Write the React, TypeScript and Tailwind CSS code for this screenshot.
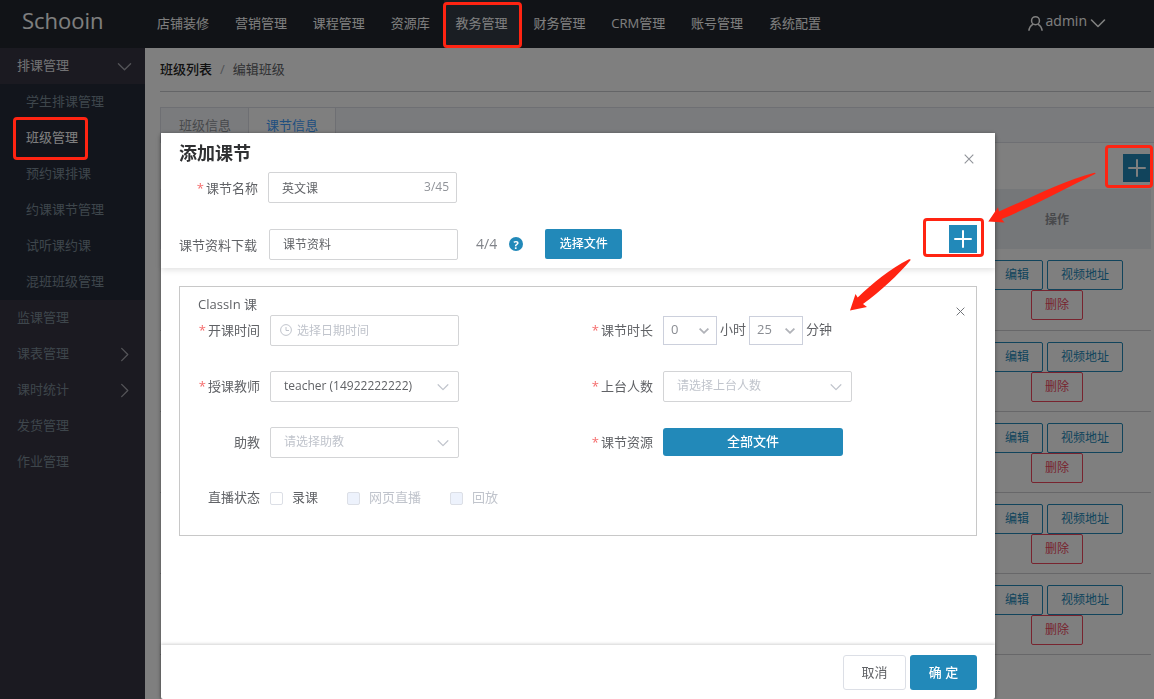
import type { ReactNode } from 'react';

const FONT = "font-['Open_Sans','Noto_Sans_CJK_SC',sans-serif]";
const FIELD =
  'h-[31px] w-full rounded-xs border border-[#d3d4d6] bg-white px-[13px] text-xs text-[#606266] outline-none placeholder:text-[#c0c4cc]';

const NAV = ['店铺装修', '营销管理', '课程管理', '资源库', '教务管理', '财务管理', 'CRM管理', '账号管理', '系统配置'];
const SUB_MENU = ['学生排课管理', '班级管理', '预约课排课', '约课课节管理', '试听课约课', '混班班级管理'];
const MENU = [
  { label: '监课管理', children: false },
  { label: '课表管理', children: true },
  { label: '课时统计', children: true },
  { label: '发货管理', children: false },
  { label: '作业管理', children: false },
];
const LESSONS = [1, 2, 3, 4, 5];

function Chevron({ className, width = 1 }: { className: string; width?: number }) {
  return (
    <svg viewBox="0 0 16 16" className={className} fill="none" stroke="currentColor" strokeWidth={width} strokeLinecap="round" strokeLinejoin="round" aria-hidden="true">
      <path d="M1.5 5 8 11.5 14.5 5" />
    </svg>
  );
}

function Cross({ className }: { className: string }) {
  return (
    <svg viewBox="0 0 10 10" className={className} fill="none" stroke="currentColor" strokeWidth="1.1" aria-hidden="true">
      <path d="M.7.7l8.6 8.6M9.3.7.7 9.3" />
    </svg>
  );
}

function Plus() {
  return (
    <svg viewBox="0 0 18 18" className="size-[18px]" fill="none" stroke="currentColor" strokeWidth="2" strokeLinecap="round" aria-hidden="true">
      <path d="M9 1v16M1 9h16" />
    </svg>
  );
}

function Highlight({ className }: { className: string }) {
  return <span className={`pointer-events-none absolute z-30 rounded-[4px] border-3 border-[#ff2412] ${className}`} />;
}

function Label({ htmlFor, required, children }: { htmlFor: string; required?: boolean; children: ReactNode }) {
  return (
    <label htmlFor={htmlFor} className="shrink-0 whitespace-nowrap text-right text-[13px] leading-5 text-[#606266]">
      {required && <span className="mr-0.5 text-[#f56c6c]">*</span>}
      {children}
    </label>
  );
}

function FormItem({ id, label, required, children }: { id: string; label: string; required?: boolean; children: ReactNode }) {
  return (
    <div className="flex h-[30px] items-center gap-[10px]">
      <div className="flex w-[75px] shrink-0 justify-end">
        <Label htmlFor={id} required={required}>{label}</Label>
      </div>
      {children}
    </div>
  );
}

function Dropdown({ id, text, placeholder }: { id: string; text: string; placeholder?: boolean }) {
  return (
    <div className="relative w-[189px]">
      <select id={id} className={`appearance-none ${FIELD} ${placeholder ? 'text-[#c0c4cc]!' : ''}`}>
        <option>{text}</option>
      </select>
      <Chevron className="pointer-events-none absolute top-[10px] right-[10px] size-3 text-[#c0c4cc]" width={1.6} />
    </div>
  );
}

function SmallSelect({ id, text, label }: { id: string; text: string; label: string }) {
  return (
    <div className="relative w-[54px]">
      <select id={id} aria-label={label} className="h-[29px] w-full appearance-none border border-[#ccd0dc] bg-white px-[7px] text-[13px] text-[#8a8d93] outline-none">
        <option>{text}</option>
      </select>
      <svg viewBox="0 0 10 6" className="pointer-events-none absolute top-3 right-2 h-[6px] w-[10px] text-[#b0b2b8]" fill="none" stroke="currentColor" strokeWidth="1.8" aria-hidden="true">
        <path d="M.6.6 5 4.800 9.400.6" />
      </svg>
    </div>
  );
}

function Check({ label, disabled }: { label: string; disabled?: boolean }) {
  return (
    <label className={`flex items-center gap-[9px] text-[13px] ${disabled ? 'text-[#c0c4cc]' : 'text-[#606266]'}`}>
      <input
        type="checkbox"
        disabled={disabled}
        className="size-[13px] appearance-none rounded-xs border border-[#dcdfe6] bg-white disabled:bg-[#edf2fc]"
      />
      {label}
    </label>
  );
}

function Header() {
  return (
    <header className="flex h-12 items-center bg-[#23272e] text-white">
      <div className="w-[145px] shrink-0 pb-2 pl-[22px] text-[22px] leading-8">Schooin</div>
      <nav className="flex h-full w-[688px] justify-between">
        {NAV.map((item) => {
          const active = item === '教务管理';
          return (
            <a key={item} href="#" className={`relative flex items-center px-3 text-[13px] whitespace-nowrap ${active ? 'bg-[#343c46]' : ''}`}>
              {item}
              {active && <Highlight className="-right-0.5 -left-px top-[2px] bottom-0" />}
            </a>
          );
        })}
      </nav>
      <button type="button" className="mr-12 mb-[6px] ml-auto flex items-center gap-[3px] text-sm">
        <svg viewBox="0 0 16 16" className="mt-1 size-[15px]" fill="none" stroke="currentColor" strokeWidth="1.6" aria-hidden="true">
          <circle cx="8" cy="5" r="4.200" />
          <path d="M1 15.800c.2-3.600 2-5.800 4.600-7.200M15 15.800c-.2-3.600-2-5.800-4.600-7.200" />
        </svg>
        admin
        <Chevron className="mt-1 size-4" width={1.6} />
      </button>
    </header>
  );
}

function Sidebar() {
  return (
    <aside className="w-[145px] shrink-0 bg-[#363442] text-[13px] text-[#7d8c98]">
      <a href="#" className="flex h-9 items-center justify-between pr-[13px] pl-[17px] text-[#e4e4e8]">
        排课管理
        <Chevron className="size-[15px] text-[#a8a8b0]" width={1.4} />
      </a>
      <div className="bg-[#242b39]">
        {SUB_MENU.map((item) => {
          const active = item === '班级管理';
          return (
            <a key={item} href="#" className={`relative flex h-9 items-center pl-[26px] ${active ? 'text-white' : ''}`}>
              {item}
              {active && <Highlight className="-top-[3px] -bottom-1 left-[13px] w-[75px]" />}
            </a>
          );
        })}
      </div>
      {MENU.map((item) => (
        <a key={item.label} href="#" className="flex h-9 items-center justify-between pr-[13px] pl-[17px]">
          {item.label}
          {item.children && <Chevron className="size-[15px] -rotate-90 text-[#a8a8b0]" width={1.4} />}
        </a>
      ))}
    </aside>
  );
}

function Page() {
  const button = 'h-[30px] rounded-xs border px-[13px] text-xs';
  return (
    <main className="min-w-0 flex-1 bg-white pl-[15px]">
      <div className="mr-[3px] flex h-11 items-center gap-2 border-b border-[#c9cbcf] text-[13px]">
        <a href="#" className="font-medium text-[#222]">班级列表</a>
        <span className="text-[#a0a4ac]">/</span>
        <span className="text-[#606266]">编辑班级</span>
      </div>
      <div className="mt-[15px] flex h-9 border border-r-0 border-[#dcdfe6] bg-[#f5f7fa] text-[13px]">
        <button type="button" className="pt-0.5 pr-[17px] pl-[18px] text-[#909399]">班级信息</button>
        <button type="button" className="border-x border-[#dcdfe6] bg-white px-[17px] pt-0.5 text-[#409eff]">课节信息</button>
      </div>
      <div className="mr-[3px] flex h-[46px] items-center justify-end pt-1">
        <div className="relative">
          <button type="button" aria-label="+" className="flex size-7 items-center justify-center bg-[#2289b9] text-white">
            <Plus />
          </button>
          <Highlight className="-top-[9px] -right-0.5 h-[43px] w-12" />
        </div>
      </div>
      <div className="mr-[3px]">
        <table className="w-full table-fixed border-collapse">
          <thead>
            <tr className="h-[60px] bg-[#ebeef2]">
              <th />
              <th className="w-[188px] pt-0.5 text-xs font-bold text-[#909399]">操作</th>
            </tr>
          </thead>
          <tbody>
            {LESSONS.map((lesson) => (
              <tr key={lesson} className="h-[81px] border-b border-[#cfcfd2]">
                <td />
                <td className="p-0 pt-0.5">
                  <div className="flex flex-wrap justify-center gap-x-1">
                    <button type="button" className={`${button} border-[#2289b9] text-[#2289b9]`}>编辑</button>
                    <button type="button" className={`${button} border-[#2289b9] text-[#2289b9]`}>视频地址</button>
                    <button type="button" className={`${button} border-[#f0485e] text-[#f0485e]`}>删除</button>
                  </div>
                </td>
              </tr>
            ))}
          </tbody>
        </table>
      </div>
    </main>
  );
}

function DialogHeader() {
  return (
    <div className="relative z-10 bg-white px-[18px] pt-[6px] pb-[9px] shadow-[0_2px_6px_rgba(0,0,0,0.12)]">
      <div className="flex h-[33px] items-start justify-between">
        <h2 className="text-lg leading-7 font-bold text-[#303133]">添加课节</h2>
        <button type="button" aria-label="×" className="p-[3px] text-[#909399]">
          <Cross className="mt-3 size-[10px]" />
        </button>
      </div>
      <div className="flex items-center gap-[10px]">
        <div className="flex w-[79px] justify-end"><Label htmlFor="name" required>课节名称</Label></div>
        <div className="relative w-[189px]">
          <input id="name" defaultValue="英文课" className={FIELD} />
          <span className="absolute top-[7px] right-2 text-xs text-[#909399]">3/45</span>
        </div>
      </div>
      <div className="mt-[26px] flex h-[30px] items-center">
        <div className="w-[79px]"><Label htmlFor="files">课节资料下载</Label></div>
        <div className="ml-[11px] w-[189px]">
          <input id="files" defaultValue="课节资料" className={FIELD} />
        </div>
        <span className="ml-[18px] text-sm text-[#808389]">4/4</span>
        <span className="ml-3 flex size-[14px] items-center justify-center rounded-full bg-[#2289b9] text-[11px] leading-none font-bold text-white">?</span>
        <button type="button" className="ml-[22px] h-[30px] w-[77px] rounded-xs bg-[#2289b9] text-xs font-medium text-white">选择文件</button>
        <div className="relative mb-[10px] ml-auto">
          <button type="button" aria-label="+" className="flex size-7 items-center justify-center bg-[#2289b9] text-white">
            <Plus />
          </button>
          <Highlight className="-top-[7px] -right-[7px] h-[39px] w-[61px]" />
        </div>
      </div>
    </div>
  );
}

function LessonCard() {
  return (
    <section className="relative border border-[#c8c8c8] px-[5px] pb-[22px]">
      <h3 className="h-7 pt-[7px] pl-[13px] text-[13px] leading-5 text-[#606266]">ClassIn 课</h3>
      <button type="button" aria-label="×" className="absolute top-[19px] right-[10px] p-px text-[#707378]">
        <Cross className="size-[9px]" />
      </button>
      <div className="grid grid-cols-2 gap-y-[26px]">
        <FormItem id="start" label="开课时间" required>
          <div className="relative w-[189px]">
            <input id="start" placeholder="选择日期时间" className={`${FIELD} pl-[26px]!`} />
            <svg viewBox="0 0 12 12" className="absolute top-[9px] left-[10px] size-3 text-[#c0c4cc]" fill="none" stroke="currentColor" aria-hidden="true">
              <circle cx="6" cy="6" r="5.400" />
              <path d="M6 3v3.500h3" />
            </svg>
          </div>
        </FormItem>
        <FormItem id="hours" label="课节时长" required>
          <div className="flex items-center gap-[3px] text-[13px] whitespace-nowrap text-[#606266]">
            <SmallSelect id="hours" text="0" label="小时" />
            小时
            <SmallSelect id="minutes" text="25" label="分钟" />
            分钟
          </div>
        </FormItem>
        <FormItem id="teacher" label="授课教师" required>
          <Dropdown id="teacher" text="teacher (14922222222)" />
        </FormItem>
        <FormItem id="seats" label="上台人数" required>
          <Dropdown id="seats" text="请选择上台人数" placeholder />
        </FormItem>
        <FormItem id="assistant" label="助教">
          <Dropdown id="assistant" text="请选择助教" placeholder />
        </FormItem>
        <FormItem id="resource" label="课节资源" required>
          <button id="resource" type="button" className="h-7 w-[180px] rounded-[3px] bg-[#2289b9] text-[13px] font-medium text-white">全部文件</button>
        </FormItem>
        <div className="col-span-2 flex h-[30px] items-center gap-[10px]">
          <span className="w-[75px] text-right text-[13px] text-[#606266]">直播状态</span>
          <div className="flex gap-[29px]">
            <Check label="录课" />
            <Check label="网页直播" disabled />
            <Check label="回放" disabled />
          </div>
        </div>
      </div>
    </section>
  );
}

function Arrows() {
  return (
    <svg viewBox="0 0 250 142" className="pointer-events-none absolute top-[171px] left-[848px] z-40 h-[142px] w-[250px] fill-[#ff2412]" aria-hidden="true">
      <path d="M140.300 50.500 150 36.300 151 40.500 C180 28 215 10 246.500 1.700 Q248.500 2 247 3 C215 19 185 35 153.500 48 L156.500 51.500Z" />
      <path d="M2 139.500 7.500 123 9.700 126.500 C25 112 42 98 61 88.300 Q63.500 88 62.300 89.500 C50 104 33 120 15 133 L19 136Z" />
    </svg>
  );
}

export default function App() {
  return (
    <div className={`flex min-h-screen flex-col ${FONT}`}>
      <Header />
      <div className="flex flex-1">
        <Sidebar />
        <Page />
      </div>
      <div className="pointer-events-none fixed inset-0 z-10 bg-black/50" />
      <div className="absolute inset-0 z-20 flex justify-center pt-[133px] pl-[2px]">
        <div role="dialog" aria-label="添加课节" className="flex w-full max-w-[834px] flex-col rounded-xs bg-white shadow-[0_1px_4px_rgba(0,0,0,0.4)]">
          <DialogHeader />
          <div className="flex-1 p-[18px]">
            <LessonCard />
          </div>
          <footer className="flex justify-end gap-1 px-[18px] pt-[10px] pb-[9px] shadow-[0_-1px_3px_rgba(0,0,0,0.18)]">
            <button type="button" className="h-[35px] w-[63px] rounded-[3px] border border-[#dcdfe6] text-[13px] text-[#606266]">取消</button>
            <button type="button" className="h-[35px] w-[67px] rounded-[3px] bg-[#2289b9] text-[13px] font-medium whitespace-pre text-white">确 定</button>
          </footer>
        </div>
      </div>
      <Arrows />
    </div>
  );
}
